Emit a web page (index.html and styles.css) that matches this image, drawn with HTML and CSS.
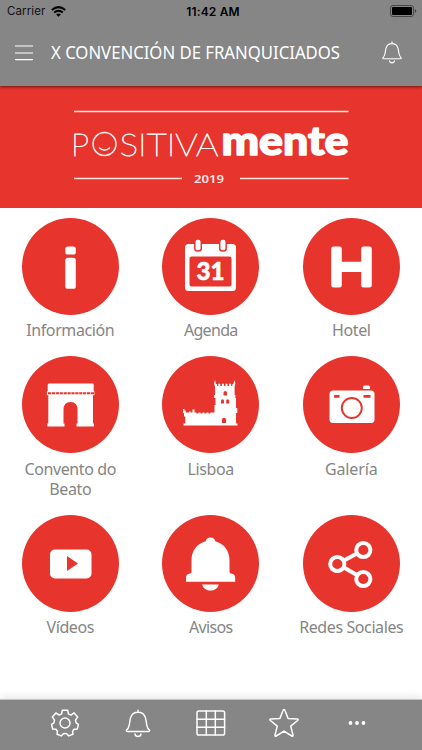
FILE: index.html
```html
<!DOCTYPE html>
<html lang="es">
<head>
<meta charset="utf-8">
<title>X Convención de Franquiciados</title>
<link rel="stylesheet" href="styles.css">
</head>
<body>
<div class="app">
  <header class="header">
    <div class="status">
      <div class="carrier"><span>Carrier</span>
        <svg class="wifi" width="15" height="11" viewBox="0 0 15 11"><g fill="none" stroke="#000" stroke-width="2"><path d="M.8 4Q7.5-1.8 14.2 4"/><path d="M3.2 6.6Q7.5 3 11.8 6.6"/></g><path d="M5.1 8.4Q7.5 6.5 9.9 8.4L7.5 10.8Z"/></svg>
      </div>
      <span class="clock">11:42 AM</span>
      <svg class="battery" width="27" height="12" viewBox="0 0 27 12"><rect x=".5" y=".5" width="23" height="11" rx="2.5" fill="none" stroke="#484848"/><rect x="2" y="2" width="20" height="8" rx="1"/><path d="M24.8 4v4q1.5-.6 1.5-2t-1.5-2" fill="#484848"/></svg>
    </div>
    <div class="bar">
      <svg class="menu" width="18" height="16" viewBox="0 0 18 16"><path d="M0 1h18M0 8h18M0 14.6h18" stroke="#fff" stroke-width="1.2"/></svg>
      <svg class="title" width="300" height="34" viewBox="0 0 300 34"><text x="0" y="23" textLength="289" lengthAdjust="spacingAndGlyphs">X CONVENCIÓN DE FRANQUICIADOS</text></svg>
      <svg class="bell" width="20" height="23" viewBox="0 0 26 30"><g class="line"><path d="M13 1.200v2M2 23.200c-1.400 0-1.300-1.400-.2-2.100C5 18.500 3.700 12.500 5.600 8.300C6.800 5 9.200 3.400 13 3.400s6.200 1.600 7.400 4.900c1.900 4.200.6 10.200 3.800 12.800c1.100.7 1.200 2.100-.2 2.100ZM9.900 25.800c.4 3.600 5.800 3.600 6.200 0"/></g></svg>
    </div>
  </header>

  <section class="banner">
    <svg width="422" height="122" viewBox="0 0 422 122">
      <path d="M74 25.500H348.500M74 92.500H182M240 92.500H348.500" stroke="#ffe4e2" stroke-width="1.300"/>
      <text class="logo-thin" x="71" y="69.500" textLength="18" lengthAdjust="spacingAndGlyphs">P</text>
      <g fill="none" stroke="#ffefee" stroke-width="1.500"><circle cx="104.500" cy="58" r="11.500"/><path d="M99.500 62q5 4.200 10 0" stroke-linecap="round"/></g>
      <text class="logo-thin" x="119.500" y="69.500" textLength="99" lengthAdjust="spacingAndGlyphs">SITIVA</text>
      <text class="logo-bold" x="221.500" y="69.300" textLength="127" lengthAdjust="spacingAndGlyphs">mente</text>
      <text class="year" x="194" y="96.500" textLength="30" lengthAdjust="spacingAndGlyphs">2019</text>
    </svg>
  </section>

  <main class="grid">
    <div class="item"><svg class="disc" viewBox="0 0 97 97"><rect x="43.300" y="28.500" width="10.500" height="8" rx="2.600"/><rect x="43.300" y="39.800" width="10.500" height="31" rx="2.600"/></svg><span class="label">Información</span></div>
    <div class="item"><svg class="disc" viewBox="0 0 97 97"><path fill-rule="evenodd" d="M26.500 26h44q3.500 0 3.500 3.500v40q0 3.500-3.500 3.500h-44q-3.500 0-3.500-3.500v-40q0-3.500 3.500-3.500ZM29.500 38.500q-2 0-2 2v26q0 2 2 2h38q2 0 2-2v-26q0-2-2-2Z"/><g stroke="#e7342d" stroke-width="1.500"><rect x="32.800" y="21" width="6.500" height="12" rx="2.800"/><rect x="57.700" y="21" width="6.500" height="12" rx="2.800"/></g><text class="date" x="34.500" y="62" textLength="28" lengthAdjust="spacingAndGlyphs">31</text></svg><span class="label tight">Agenda</span></div>
    <div class="item"><svg class="disc" viewBox="0 0 97 97"><path d="M30.500 28.500h6q2.300 0 2.300 2.300v12.900h19.400v-12.900q0-2.300 2.300-2.300h6q2.300 0 2.300 2.300v36.400q0 2.300-2.300 2.300h-6q-2.300 0-2.300-2.300v-13.200h-19.400v13.200q0 2.300-2.300 2.300h-6q-2.300 0-2.300-2.300v-36.400q0-2.300 2.300-2.300Z"/></svg><span class="label">Hotel</span></div>

    <div class="item"><svg class="disc" viewBox="0 0 97 97"><path d="M27.500 27.500h43q1.200 0 1.200 1.200v6.600h.7v4h-1.400v28.200h1v3h-17.500v-3h1v-13.500q0-8-7-8t-7 8v13.500h1v3h-17.200v-3h1V39.300h-1.400v-4h.8v-6.600q0-1.200 1.800-1.200Z"/><path d="M26 37.300h46" stroke="#e7342d" stroke-width="2" stroke-dasharray="3.200 .7"/></svg><span class="label">Convento do<br>Beato</span></div>
    <div class="item"><svg class="disc" viewBox="0 0 97 97"><path fill-rule="evenodd" d="M21 53h1.400v1.500h1.300v2h3.500v-1h1.500v1h1.800v-3h2v3h2v1h2v-1h2v1h2v-1h2v1h2v-1h2v1h2v-1h4v-7.500h1V42h-1.300v-3h.8v-8.500l-1-3 1-3.500 1 4h1v2h1.300v-2.200h2v2.200h1.600v-2.200h2v2.200h1.600v-2.200h2v2.200h1.600v-2.200h2v2.200h1.300v-2h1l1-4 1 3.500-.8 3V39h.8v3H74v10h1.300v5H74v10.500h1.500v2h-54v-2h1.800V60.500H22V57h-1ZM61.500 39.500h3.500v-2.800q0-1.800-1.700-1.800t-1.800 1.800ZM59 47.500h3v-2.800q0-1.500-1.500-1.500t-1.500 1.500ZM64.200 47.500h3v-2.800q0-1.500-1.500-1.500t-1.500 1.500ZM60 67h4v-3.500q0-1.800-2-1.800t-2 1.800Z"/></svg><span class="label">Lisboa</span></div>
    <div class="item"><svg class="disc" viewBox="0 0 97 97"><path d="M60 33v-2q0-1.500 1.500-1.500h4q1.500 0 1.500 1.500v2Z"/><rect x="26.500" y="34.500" width="45" height="32.500" rx="3.500"/><g fill="#e7342d"><rect x="31" y="39" width="5.500" height="2.800" rx=".5"/><rect x="60.500" y="39" width="7" height="2.800" rx=".5"/></g><circle cx="48.800" cy="52" r="10" stroke="#e7342d" stroke-width="1.900"/></svg><span class="label wide">Galería</span></div>

    <div class="item"><svg class="disc" viewBox="0 0 97 97"><rect x="28" y="34.500" width="41.500" height="29" rx="5"/><path d="M45 41v15l11-7.500Z" fill="#e7342d"/></svg><span class="label">Vídeos</span></div>
    <div class="item"><svg class="disc" viewBox="0 0 97 97"><path d="M48.500 22.500c2.800 0 4 1.300 4.800 3.700c9 2.500 14.200 9.500 14.200 19v11.300q0 1.800 1.500 2c3.200.2 4.200 2.300 4.200 5v3.200H24v-3.200c0-2.700 1-4.800 4.200-5q1.300-.2 1.300-2V45.200c0-9.500 5.200-16.500 14.200-19c.8-2.400 2-3.700 4.800-3.700ZM40.200 69.500h16.600c-2 8-14.600 8-16.600 0Z"/></svg><span class="label tight">Avisos</span></div>
    <div class="item"><svg class="disc" viewBox="0 0 97 97"><g fill="none" stroke="#fff" stroke-width="4"><path d="M40 46l13.500-7.300M40 52l13.500 7.800"/><circle cx="34.300" cy="49" r="7.100"/><circle cx="60.300" cy="35" r="7.100"/><circle cx="60.300" cy="64" r="7.100"/></g></svg><span class="label">Redes Sociales</span></div>
  </main>

  <footer class="tabs">
    <svg width="28" height="28" viewBox="0 0 28 28"><g class="line"><circle cx="14" cy="14" r="5"/><path d="M11.300 1.200h5.400l.7 3.700 2.500 1.200 3.200-2.200 3.600 4-2.200 3.300.6 2.700 2.400 1.500-1.200 4.600-3.200.2-1.500 2 .3 3.100-4.200 1.600-2-2.200q-1.700-.6-3.400 0l-2 2.200-4.200-1.600.3-3.100-1.500-2-3.200-.2L.5 15.400l2.400-1.500.6-2.700L1.300 7.900l3.600-4 3.200 2.200 2.500-1.200Z"/></g></svg>
    <svg width="26" height="29" viewBox="0 0 26 30"><g class="line"><path d="M13 1.200v2M2 23.200c-1.400 0-1.300-1.400-.2-2.100C5 18.500 3.700 12.500 5.600 8.300C6.800 5 9.200 3.400 13 3.400s6.200 1.600 7.400 4.900c1.900 4.200.6 10.200 3.800 12.800c1.100.7 1.200 2.100-.2 2.100ZM9.900 25.800c.4 3.600 5.800 3.600 6.200 0"/></g></svg>
    <svg width="30" height="26" viewBox="0 0 30 26"><g class="line"><rect x="1" y="1" width="27.600" height="24" rx="1.800"/><path d="M10.300 1v24M19.300 1v24M1 9.300h27.600M1 17.300h27.600"/></g></svg>
    <svg width="32" height="30" viewBox="0 0 32 30"><g class="line"><path d="M16 1.500q.7 0 1 1l3.100 7.900 9 .6q1.800.3.500 1.500l-6.900 5.600 2.300 9q.2 1.600-1.200.9L16 23.100 8.200 28q-1.400.7-1.200-.9l2.300-9-6.900-5.600q-1.300-1.200.5-1.500l9-.6L15 2.500q.3-1 1-1Z"/></g></svg>
    <svg width="18" height="6" viewBox="0 0 18 6" fill="#fff"><circle cx="2.500" cy="3" r="1.900"/><circle cx="9" cy="3" r="1.900"/><circle cx="15.500" cy="3" r="1.900"/></svg>
  </footer>
</div>
</body>
</html>
```
FILE: styles.css
```css
* { box-sizing: border-box; }
body { margin: 0; background: #fff; font-family: "Noto Sans", sans-serif; }
svg { display: block; flex: none; }
.app { width: 422px; height: 750px; display: flex; flex-direction: column; overflow: hidden; }

.header { height: 86px; flex: none; background: #868686; box-shadow: 0 1px 3px rgba(0,0,0,.55); z-index: 1; }
.status { height: 22px; display: grid; grid-template-columns: 1fr auto 1fr; align-items: center; padding: 0 5px 0 7px; font: 11.5px Inter, sans-serif; color: #111; }
.carrier { display: flex; align-items: center; gap: 6px; letter-spacing: .1px; }
.clock { font-weight: 600; font-size: 12px; letter-spacing: .15px; color: #000; padding-left: 2px; }
.battery { justify-self: end; }
.bar { height: 61px; display: flex; align-items: center; padding: 0 20px 0 15px; }
.title { margin-left: 18px; overflow: visible; }
.title text { font-size: 18px; fill: #fff; }
.bell { margin-left: auto; }
.line { fill: none; stroke: #fff; stroke-width: 1.5; stroke-linejoin: round; stroke-linecap: round; }

.banner { height: 122px; flex: none; background: #e7342d; }
.logo-thin { font: 100 32.5px Lato, sans-serif; fill: #fff; stroke: #fff; stroke-width: .8px; }
.logo-bold { font: 900 40px Lato, sans-serif; fill: #fff; stroke: #fff; stroke-width: 1.5px; stroke-linejoin: round; }
.year { font: 600 11.5px "Noto Sans", sans-serif; fill: #ffe9e8; }

.grid { flex: 1; display: grid; grid-template-columns: repeat(3, 140.500px); row-gap: 16px; align-content: start; padding-top: 9.500px; }
.item { display: flex; flex-direction: column; align-items: center; gap: 5.500px; text-align: center; font-size: 16px; line-height: 20px; color: #858585; }
.label { letter-spacing: -.4px; }
.label.tight { letter-spacing: -.7px; }
.label.wide { letter-spacing: -.15px; }
.disc { width: 97px; height: 97px; border-radius: 50%; background: #e7342d; fill: #fff; }
.date { font: 900 24px Lato, sans-serif; stroke: #fff; stroke-width: .6px; }

.tabs { height: 51px; flex: none; background: #868686; border-top: 1px solid #c4c4c4; box-shadow: 0 -2px 8px rgba(0,0,0,.1); display: grid; grid-template-columns: repeat(5, 73px); justify-content: center; justify-items: center; align-items: center; padding-bottom: 4px; }
```
